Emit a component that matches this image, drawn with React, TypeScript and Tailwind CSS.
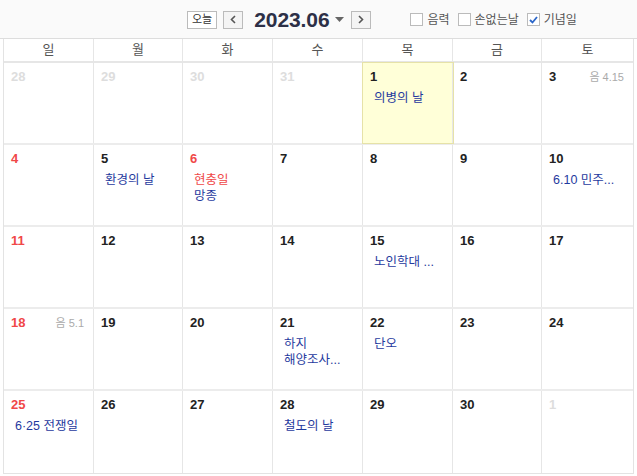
import React from 'react';

type Ev = { text: string; red?: boolean };
type Day = { n: number; other?: boolean; today?: boolean; holiday?: boolean; lunar?: string; events?: Ev[] };

const weekdays = ['일', '월', '화', '수', '목', '금', '토'];

const weeks: Day[][] = [
  [
    { n: 28, other: true },
    { n: 29, other: true },
    { n: 30, other: true },
    { n: 31, other: true },
    { n: 1, today: true, events: [{ text: '의병의 날' }] },
    { n: 2 },
    { n: 3, lunar: '4.15' },
  ],
  [
    { n: 4 },
    { n: 5, events: [{ text: '환경의 날' }] },
    { n: 6, holiday: true, events: [{ text: '현충일', red: true }, { text: '망종' }] },
    { n: 7 },
    { n: 8 },
    { n: 9 },
    { n: 10, events: [{ text: '6.10 민주...' }] },
  ],
  [
    { n: 11 },
    { n: 12 },
    { n: 13 },
    { n: 14 },
    { n: 15, events: [{ text: '노인학대 ...' }] },
    { n: 16 },
    { n: 17 },
  ],
  [
    { n: 18, lunar: '5.1' },
    { n: 19 },
    { n: 20 },
    { n: 21, events: [{ text: '하지' }, { text: '해양조사...' }] },
    { n: 22, events: [{ text: '단오' }] },
    { n: 23 },
    { n: 24 },
  ],
  [
    { n: 25, events: [{ text: '6·25 전쟁일' }] },
    { n: 26 },
    { n: 27 },
    { n: 28, events: [{ text: '철도의 날' }] },
    { n: 29 },
    { n: 30 },
    { n: 1, other: true },
  ],
];

const font = { fontFamily: '"Liberation Sans", "Noto Sans CJK KR", sans-serif' };

const Check = ({ label, checked }: { label: string; checked?: boolean }) => (
  <label className="flex items-center gap-[4px] text-[12px] text-[#555]">
    <span className="w-[13px] h-[13px] border border-[#bbb] bg-white flex items-center justify-center">
      {checked && (
        <svg width="9" height="8" viewBox="0 0 9 8">
          <path d="M1 4 L3.5 6.5 L8 1" stroke="#2b66c9" strokeWidth="1.8" fill="none" />
        </svg>
      )}
    </span>
    {label}
  </label>
);

const App = () => {
  return (
    <div className="w-[637px] h-[476px] bg-white overflow-hidden" style={font}>
      <div className="h-[39px] bg-[#fafafa] border-b border-[#ddd] flex items-center pl-[187px] pt-[1px]">
        <button className="h-[18px] px-[4px] border border-[#bbb] bg-white text-[11px] text-[#333] leading-none">
          오늘
        </button>
        <button className="ml-[6px] w-[20px] h-[18px] border border-[#bbb] bg-[#f4f4f4] flex items-center justify-center">
          <svg width="6" height="9" viewBox="0 0 6 9">
            <path d="M5 1 L1.5 4.5 L5 8" stroke="#555" strokeWidth="1.6" fill="none" />
          </svg>
        </button>
        <div className="ml-[11px] text-[21px] font-bold text-[#2d3047] tracking-[-0.1px]">2023.06</div>
        <svg className="ml-[6px]" width="9" height="5" viewBox="0 0 9 5">
          <path d="M0 0 L9 0 L4.5 5 Z" fill="#666" />
        </svg>
        <button className="ml-[7px] w-[20px] h-[18px] border border-[#bbb] bg-[#f4f4f4] flex items-center justify-center">
          <svg width="6" height="9" viewBox="0 0 6 9">
            <path d="M1 1 L4.5 4.5 L1 8" stroke="#555" strokeWidth="1.6" fill="none" />
          </svg>
        </button>
        <div className="ml-[39px] flex items-center gap-[8px]">
          <Check label="음력" />
          <Check label="손없는날" />
          <Check label="기념일" checked />
        </div>
      </div>
      <div className="px-[3px]">
        <div className="border-l border-r border-b border-[#e3e3e3]">
          <div className="grid grid-cols-[90px_89px_90px_90px_90px_89px_1fr] h-[24px] border-b-[2px] border-[#e6e6e6]">
            {weekdays.map((w, i) => (
              <div
                key={w}
                className={`flex items-center justify-center text-[13px] text-[#555] ${i < 6 ? 'border-r border-[#e6e6e6]' : ''}`}
              >
                {w}
              </div>
            ))}
          </div>
          {weeks.map((week, wi) => (
            <div
              key={wi}
              className={`grid grid-cols-[90px_89px_90px_90px_90px_89px_1fr] h-[82px] ${wi < 4 ? 'border-b-[2px] border-[#ececec]' : ''}`}
            >
              {week.map((d, i) => (
                <div
                  key={i}
                  className={`relative pl-[7px] pt-[6px] ${i < 6 ? 'border-r border-[#e6e6e6]' : ''} ${d.today ? 'bg-[#ffffd8] outline outline-1 outline-[#e6e2a8]' : ''}`}
                >
                  <div
                    className={`text-[13px] font-bold leading-[16px] ${
                      d.other ? 'text-[#ddd]' : i === 0 || d.holiday ? 'text-[#f04848]' : 'text-[#222]'
                    }`}
                  >
                    {d.n}
                  </div>
                  {d.lunar && (
                    <div className="absolute right-[9px] top-[6px] text-[11px] text-[#aaa] leading-[16px]">
                      음 {d.lunar}
                    </div>
                  )}
                  <div className="mt-[5px] pl-[4px]">
                    {d.events?.map((e) => (
                      <div
                        key={e.text}
                        className={`text-[12.5px] leading-[16px] whitespace-nowrap ${e.red ? 'text-[#f04848]' : 'text-[#1f3a9e]'}`}
                      >
                        {e.text}
                      </div>
                    ))}
                  </div>
                </div>
              ))}
            </div>
          ))}
        </div>
      </div>
    </div>
  );
};

export default App;
